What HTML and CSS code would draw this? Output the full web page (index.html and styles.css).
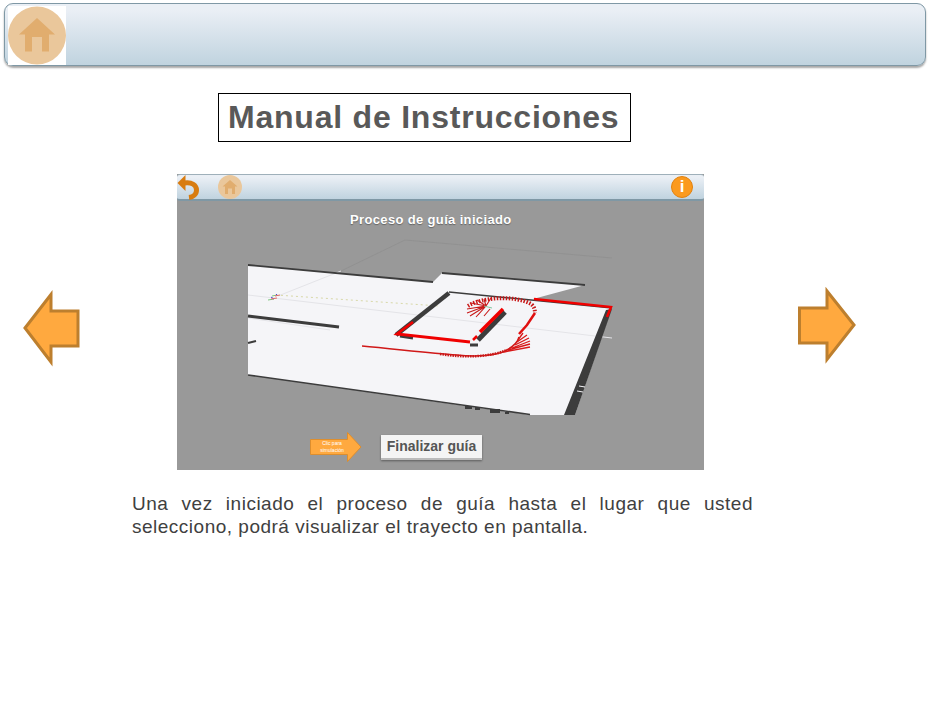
FILE: index.html
```html
<!DOCTYPE html>
<html lang="es">
<head>
    <meta charset="UTF-8">
    <title>Manual de Instrucciones</title>
    <link rel="stylesheet" href="styles.css">
</head>
<body>
    <div class="page">
        <header class="topbar">
            <div class="home-box">
                <svg class="home-icon" viewBox="0 0 58 59" width="58" height="59">
                    <circle cx="29" cy="29.5" r="29" fill="#eac79b"/>
                    <path d="M29 12 L47 28.500 H41 V45.500 H34 V31 H24 V45.500 H17 V28.500 H11 Z" fill="#e1ad6e"/>
                </svg>
            </div>
        </header>

        <h1 class="title">Manual de Instrucciones</h1>

        <main class="stage">
            <svg class="nav-arrow nav-left" viewBox="0 0 60 78" width="60" height="78">
                <path d="M4 38 L30 4.500 V21 H57 V56 H30 V72 Z" fill="#ffa93f" stroke="#bd7f2e" stroke-width="3"/>
            </svg>

            <section class="screen">
                <div class="screen-bar">
                    <svg class="back-icon" viewBox="0 0 22 25" width="22" height="25">
                        <path d="M8.500 0 L0.500 8 L8.500 16 Z" fill="#d87c10"/>
                        <path d="M7 8 C15 6.500 19.500 10.500 19.500 15 C19.500 19.500 16 22 12 22.500" stroke="#d87c10" stroke-width="5" fill="none"/>
                    </svg>
                    <svg class="mini-home" viewBox="0 0 24 24" width="24" height="24">
                        <circle cx="12" cy="12" r="12" fill="#eac79b"/>
                        <path d="M12 5 L19.500 11.500 H17 V19 H14 V13.500 H10 V19 H7 V11.500 H4.500 Z" fill="#e1ad6e"/>
                    </svg>
                    <span class="info-icon">i</span>
                </div>

                <p class="screen-caption">Proceso de guía iniciado</p>

                <svg class="map" viewBox="177 228 527 200" width="527" height="200">
                    <path d="M341 271 L405 240 L612 258" stroke="#8f8f8f" stroke-width="0.800" fill="none"/>
                    <path d="M248 265 L433 282 L442 273 L585 285 L533 299 L612 307 L575 415 L530 415 L248 375 Z" fill="#f5f5f8"/>
                    <path d="M248 295 L612 338 M248 318 L330 330 M278 296 L341 271" stroke="#e4e4e8" stroke-width="1" fill="none"/>

                    <path d="M248 265 L433 282 M442 273 L585 285" stroke="#3c3c3c" stroke-width="1.800" fill="none"/>
                    <path d="M248 375 L530 414.500" stroke="#3c3c3c" stroke-width="1.600" fill="none"/>
                    <path d="M248 316 L339 327" stroke="#3c3c3c" stroke-width="3" fill="none"/>
                    <path d="M248 343 L256 341" stroke="#3c3c3c" stroke-width="2" fill="none"/>
                    <path d="M465 406 h7 v3 h-7 z M475 407 h5 v3 h-5 z M490 409 h10 v4 h-10 z M505 412 h4 v2 h-4 z" fill="#3c3c3c"/>
                    <path d="M606 310 L612 309 L575 415 L564 415 Z" fill="#3c3c3c"/>
                    <path d="M579 386 l6 1 M577 391 l6 1" stroke="#f5f5f8" stroke-width="1"/>

                    <path d="M276 295 L440 306" stroke="#d8d8a8" stroke-width="1" stroke-dasharray="2 3" fill="none"/>
                    <path d="M268 300 l6 -1 M272 296 l5 -1" stroke="#7fc77f" stroke-width="1"/>
                    <path d="M274 299 l-3 -2 M278 296 l-2 -2" stroke="#4a4ad0" stroke-width="1"/>
                    <path d="M271 299 l6 -1 M275 296 l5 -1" stroke="#e06a6a" stroke-width="1"/>

                    <path d="M449 292 L612 308" stroke="#3c3c3c" stroke-width="1.500" fill="none"/>
                    <path d="M449 293 L396 335" stroke="#3c3c3c" stroke-width="4.500" fill="none"/>
                    <path d="M400 336 L413 338 M470 345 L478 345" stroke="#3c3c3c" stroke-width="3" fill="none"/>
                    <path d="M505 312 L478 340" stroke="#3c3c3c" stroke-width="5" fill="none"/>
                    <path d="M534 299 L611 307 L607 317" stroke="#f00000" stroke-width="2.500" fill="none"/>
                    <path d="M413 322 L397 334 L470 342" stroke="#f00000" stroke-width="2.800" fill="none"/>
                    <path d="M503 309 L480 332" stroke="#f00000" stroke-width="3.500" fill="none"/>
                    <path d="M477 336 L473 340" stroke="#f00000" stroke-width="2.500" fill="none"/>

                    <path d="M362 346 C395 349 430 353 457 355 C475 357 497 356 507 350 C514 346 518 342 519 337" stroke="#d01818" stroke-width="1.500" fill="none"/>
                    <path d="M440 354 C465 358 490 357 507 350" stroke="#c81818" stroke-width="2.500" stroke-dasharray="1.500 1" fill="none"/>
                    <path d="M504 352 L530 347 M508 350 L530 344 M512 348 L530 341 M515 345 L529 338 M517 342 L527 335 M518 340 L523 333" stroke="#d81818" stroke-width="1.300" fill="none"/>
                    <path d="M519 334 L527 325 L535 313" stroke="#e01010" stroke-width="2.500" fill="none"/>
                    <path d="M486 306 L467 309 M486 306 L467 313 M486 306 L470 316 M486 306 L476 317 M486 306 L478 315 M486 306 L471 303 M486 306 L477 300 M486 306 L484 299 M486 306 L491 298 M490 309 L484 316" stroke="#c81818" stroke-width="1.100" fill="none"/>
                    <path d="M468 306 C482 297 515 295 531 304 C534 306 535 310 535 313" stroke="#c81818" stroke-width="4" stroke-dasharray="1.500 1.500" fill="none"/>
                    <path d="M484 306 L492 308" stroke="#7fc7a0" stroke-width="1"/>
                </svg>

                <div class="screen-foot">
                    <div class="sim-arrow">
                        <svg viewBox="0 0 52 30" width="52" height="30">
                            <path d="M0.500 7.500 H37.500 V0.500 L51 15 L37.500 29.500 V22.500 H0.500 Z" fill="#ffa93f" stroke="#dd8e2e" stroke-width="1"/>
                        </svg>
                        <span class="sim-label">Clic para simulación</span>
                    </div>
                    <button class="finish-btn" type="button">Finalizar guía</button>
                </div>
            </section>

            <svg class="nav-arrow nav-right" viewBox="0 0 60 78" width="60" height="78">
                <path d="M57 38 L30 4 V21 H2.500 V56 H30 V72.500 Z" fill="#ffa93f" stroke="#bd7f2e" stroke-width="3"/>
            </svg>
        </main>

        <p class="description">Una vez iniciado el proceso de guía hasta el lugar que usted selecciono, podrá visualizar el trayecto en pantalla.</p>
    </div>
</body>
</html>
```

FILE: styles.css
```css
body {
    margin: 0;
    background-color: #fff;
    font-family: "Liberation Sans", Arial, sans-serif;
}
.page {
    width: 931px;
    height: 703px;
    overflow: hidden;
}
.topbar {
    box-sizing: border-box;
    height: 63px;
    margin: 3px 5px 0 4px;
    padding: 2px 0 0 3px;
    border: 1px solid #7f98a5;
    border-radius: 9px;
    background: linear-gradient(to bottom, #eaeff5 10%, #c0d3df 100%);
    box-shadow: 0 2px 2px rgba(0, 0, 0, 0.35);
}
.home-box {
    width: 58px;
    height: 59px;
    background-color: #fff;
}
.home-icon {
    display: block;
}
.title {
    box-sizing: border-box;
    width: 413px;
    height: 49px;
    margin: 27px 0 0 218px;
    border: 1px solid #000;
    padding-left: 9px;
    font-size: 32px;
    font-weight: bold;
    line-height: 46px;
    letter-spacing: 0.78px;
    color: #595959;
    white-space: nowrap;
}
.stage {
    display: grid;
    grid-template-columns: 177px 527px 1fr;
    margin-top: 32px;
}
.nav-arrow {
    display: block;
}
.nav-left {
    margin: 116px 0 0 21px;
}
.nav-right {
    margin: 113px 0 0 93px;
}
.screen {
    height: 296px;
    background-color: #999;
}
.screen-bar {
    box-sizing: border-box;
    display: flex;
    align-items: center;
    height: 27px;
    border-top: 1px solid #9fb0ba;
    border-bottom: 2px solid #7f98a5;
    border-radius: 3px;
    background: linear-gradient(to bottom, #eaeff5 10%, #c0d3df 100%);
}
.back-icon {
    flex: none;
}
.mini-home {
    margin-left: 19px;
    flex: none;
}
.info-icon {
    width: 22px;
    height: 22px;
    margin-left: auto;
    margin-right: 11px;
    border: 1px solid #e2820f;
    box-sizing: border-box;
    border-radius: 50%;
    background-color: #fb9a1f;
    color: #fff;
    font-size: 17px;
    font-weight: bold;
    line-height: 20px;
    text-align: center;
}
.screen-caption {
    margin: 10px 0 0 173px;
    font-size: 13px;
    font-weight: bold;
    line-height: 18px;
    letter-spacing: 0.35px;
    color: #fff;
    text-shadow: 0 1px 1px rgba(0, 0, 0, 0.35);
}
.map {
    display: block;
    margin-top: -1px;
    filter: blur(0.4px);
}
.screen-foot {
    display: flex;
    align-items: center;
    margin-top: 4px;
    padding-left: 133px;
}
.sim-arrow {
    position: relative;
    width: 52px;
    height: 30px;
}
.sim-arrow svg {
    display: block;
}
.sim-label {
    position: absolute;
    left: 2px;
    top: 8px;
    width: 40px;
    font-size: 5px;
    line-height: 7px;
    text-align: center;
    color: #fff;
}
.finish-btn {
    box-sizing: border-box;
    width: 101px;
    height: 25px;
    margin-left: 19px;
    padding: 0;
    border: none;
    border-bottom: 2px solid #bbb;
    background-color: #f4f4f4;
    font-family: "Liberation Sans", Arial, sans-serif;
    font-size: 14px;
    font-weight: bold;
    color: #555;
    box-shadow: 0 1px 2px rgba(0, 0, 0, 0.4);
}
.description {
    width: 621px;
    margin: 22px 0 0 132px;
    font-size: 19px;
    line-height: 23px;
    letter-spacing: 0.5px;
    text-align: justify;
    color: #404040;
}
```
